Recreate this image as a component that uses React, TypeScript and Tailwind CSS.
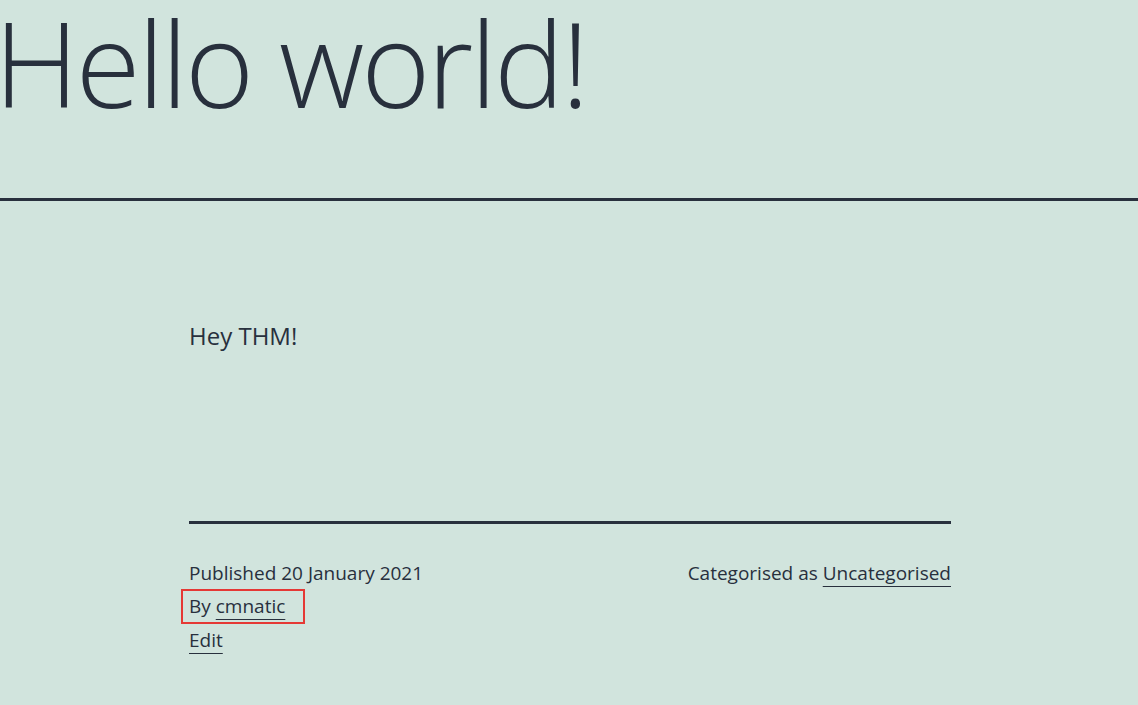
export default function App() {
  return (
    <div
      className="min-h-[705px] w-full overflow-hidden bg-[#d1e4dd] text-[#28303d]"
      style={{ fontFamily: '"Open Sans", "Noto Sans", sans-serif' }}
    >
      <header>
        <h1 className="-ml-[6px] text-[118px] font-light leading-[126px] tracking-[-3px]">
          Hello world!
        </h1>
      </header>
      <div className="mt-[72px] h-[3px] w-full bg-[#28303d]" />

      <main className="ml-[189px] w-[762px]">
        <p className="mt-[118px] text-[24px] leading-[34px]">Hey THM!</p>

        <div className="mt-[168px] h-[3px] w-full bg-[#28303d]" />

        <footer className="mt-[32px] flex justify-between text-[19px] leading-[34px]">
          <div className="flex flex-col items-start">
            <span>Published 20 January 2021</span>
            <span className="-my-[1px] -ml-[8px] border-2 border-[#e53935] pl-[6px] pr-[18px] leading-[31px]">
              By{" "}
              <a href="#" className="underline decoration-1 underline-offset-[6px]">
                cmnatic
              </a>
            </span>
            <a href="#" className="underline decoration-1 underline-offset-[6px]">
              Edit
            </a>
          </div>
          <div>
            Categorised as{" "}
            <a href="#" className="underline decoration-1 underline-offset-[6px]">
              Uncategorised
            </a>
          </div>
        </footer>
      </main>
    </div>
  );
}
